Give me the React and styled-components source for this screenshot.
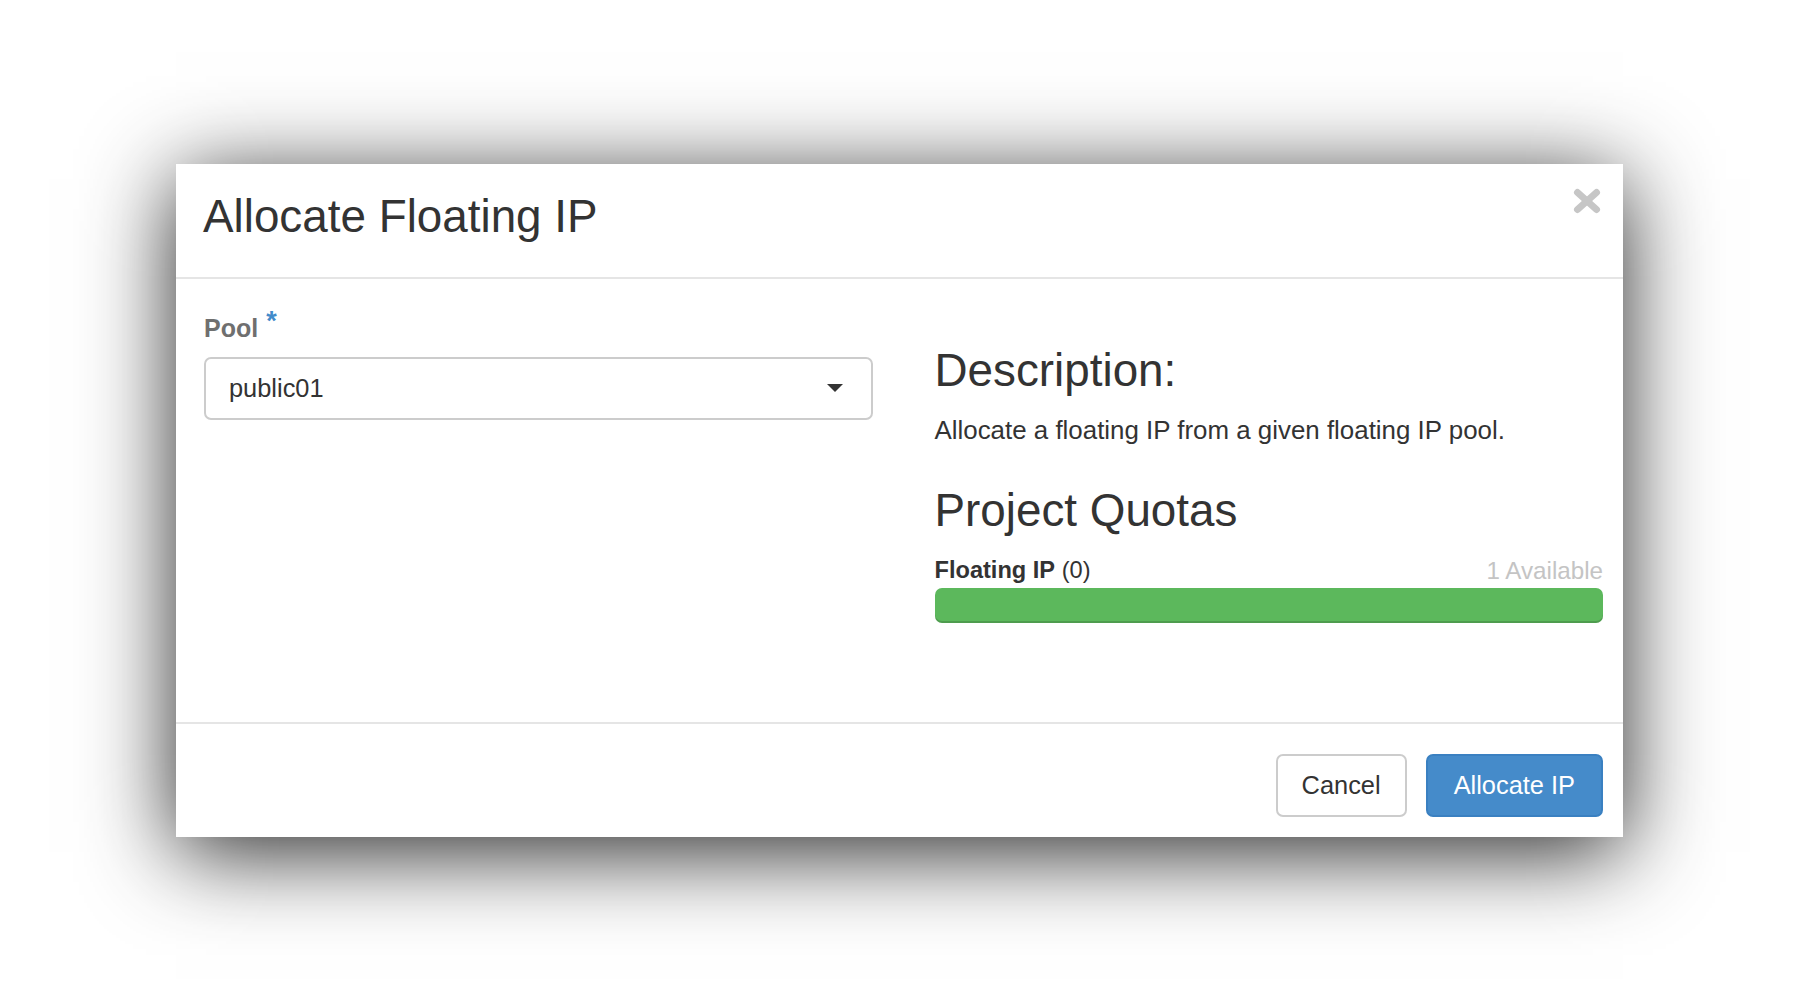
import React from "react";
import styled, { createGlobalStyle } from "styled-components";

const Global = createGlobalStyle`
  html, body { margin: 0; padding: 0; background: #fff; }
  body { font-family: "Liberation Sans", Arial, sans-serif; color: #333; }
  * { box-sizing: border-box; }
`;

const Page = styled.div`
  width: 1800px;
  height: 1000px;
  padding: 164px 0 0 176px;
  overflow: hidden;
`;

const Modal = styled.div`
  width: 1447px;
  background: #fff;
  box-shadow: 0 15px 85px rgba(0, 0, 0, 0.85);
  display: flex;
  flex-direction: column;
`;

const Header = styled.div`
  display: flex;
  justify-content: space-between;
  align-items: flex-start;
  padding: 28px 22px 35.5px 27px;
  border-bottom: 2px solid #e5e5e5;
`;

const Title = styled.h3`
  margin: 0;
  font-size: 45.8px;
  font-weight: 400;
  line-height: 49.5px;
  color: #333;
`;

const Close = styled.button`
  border: 0;
  background: none;
  padding: 0;
  margin-top: -4px;
  width: 28px;
  height: 26px;
  cursor: pointer;
  display: flex;
`;

const Body = styled.div`
  display: grid;
  grid-template-columns: 1fr 1fr;
  column-gap: 62px;
  padding: 34px 20px 99px 28px;
  border-bottom: 2px solid #e5e5e5;
`;

const Column = styled.div`
  display: flex;
  flex-direction: column;
`;

const Label = styled.label`
  font-size: 25px;
  font-weight: 700;
  line-height: 30px;
  color: #6f6f6f;
`;

const Required = styled.span`
  color: #428bca;
  font-size: 27px;
  margin-left: 8px;
  vertical-align: 7px;
  line-height: 0;
`;

const Select = styled.div`
  margin-top: 13.5px;
  height: 63px;
  border: 2px solid #ccc;
  border-radius: 7px;
  display: flex;
  align-items: center;
  justify-content: space-between;
  padding: 0 28px 0 23px;
  font-size: 25.4px;
  line-height: 30px;
  color: #333;
`;

const Heading = styled.h3`
  margin: ${(p) => p.$top || 0}px 0 0;
  font-size: 45.8px;
  font-weight: 400;
  line-height: 49.5px;
  color: #333;
`;

const Paragraph = styled.p`
  margin: 16.4px 0 0;
  font-size: 25.9px;
  line-height: 36.4px;
  color: #333;
`;

const QuotaRow = styled.div`
  margin-top: 19px;
  display: flex;
  justify-content: space-between;
  font-size: 23.6px;
  line-height: 33.6px;
`;

const QuotaName = styled.span`
  color: #333;
  b { font-weight: 700; }
`;

const QuotaAvail = styled.span`
  color: #c4c4c4;
  font-size: 24.2px;
`;

const Bar = styled.div`
  height: 35px;
  border-radius: 7px;
  background: #5cb85c;
  box-shadow: inset 0 -2px 0 rgba(0, 0, 0, 0.15);
`;

const Footer = styled.div`
  display: flex;
  justify-content: flex-end;
  gap: 19px;
  padding: 30px 20px 20px 28px;
`;

const Button = styled.button`
  height: 63px;
  padding: 0 ${(p) => (p.$primary ? 26 : 24)}px;
  border-radius: 7px;
  font-family: "Liberation Sans", Arial, sans-serif;
  font-size: 25.4px;
  border: 2px solid ${(p) => (p.$primary ? "#3a80c1" : "#ccc")};
  background: ${(p) => (p.$primary ? "#458bca" : "#fff")};
  color: ${(p) => (p.$primary ? "#fff" : "#333")};
  cursor: pointer;
`;

export default function App() {
  return (
    <>
      <Global />
      <Page>
        <Modal>
          <Header>
            <Title>Allocate Floating IP</Title>
            <Close aria-label="Close">
              <svg width="28" height="26" viewBox="0 0 28 26">
                <g stroke="#c6c6c6" strokeWidth="7" strokeLinecap="round">
                  <line x1="4.5" y1="4.5" x2="23.5" y2="21.5" />
                  <line x1="23.5" y1="4.5" x2="4.5" y2="21.5" />
                </g>
              </svg>
            </Close>
          </Header>
          <Body>
            <Column>
              <Label>
                Pool<Required>*</Required>
              </Label>
              <Select>
                <span>public01</span>
                <svg width="16" height="8" viewBox="0 0 16 8">
                  <path d="M0 0 H16 L8 8 Z" fill="#333" />
                </svg>
              </Select>
            </Column>
            <Column>
              <Heading $top={33.4}>Description:</Heading>
              <Paragraph>Allocate a floating IP from a given floating IP pool.</Paragraph>
              <Heading $top={37}>Project Quotas</Heading>
              <QuotaRow>
                <QuotaName>
                  <b>Floating IP</b> (0)
                </QuotaName>
                <QuotaAvail>1 Available</QuotaAvail>
              </QuotaRow>
              <Bar />
            </Column>
          </Body>
          <Footer>
            <Button>Cancel</Button>
            <Button $primary>Allocate IP</Button>
          </Footer>
        </Modal>
      </Page>
    </>
  );
}
